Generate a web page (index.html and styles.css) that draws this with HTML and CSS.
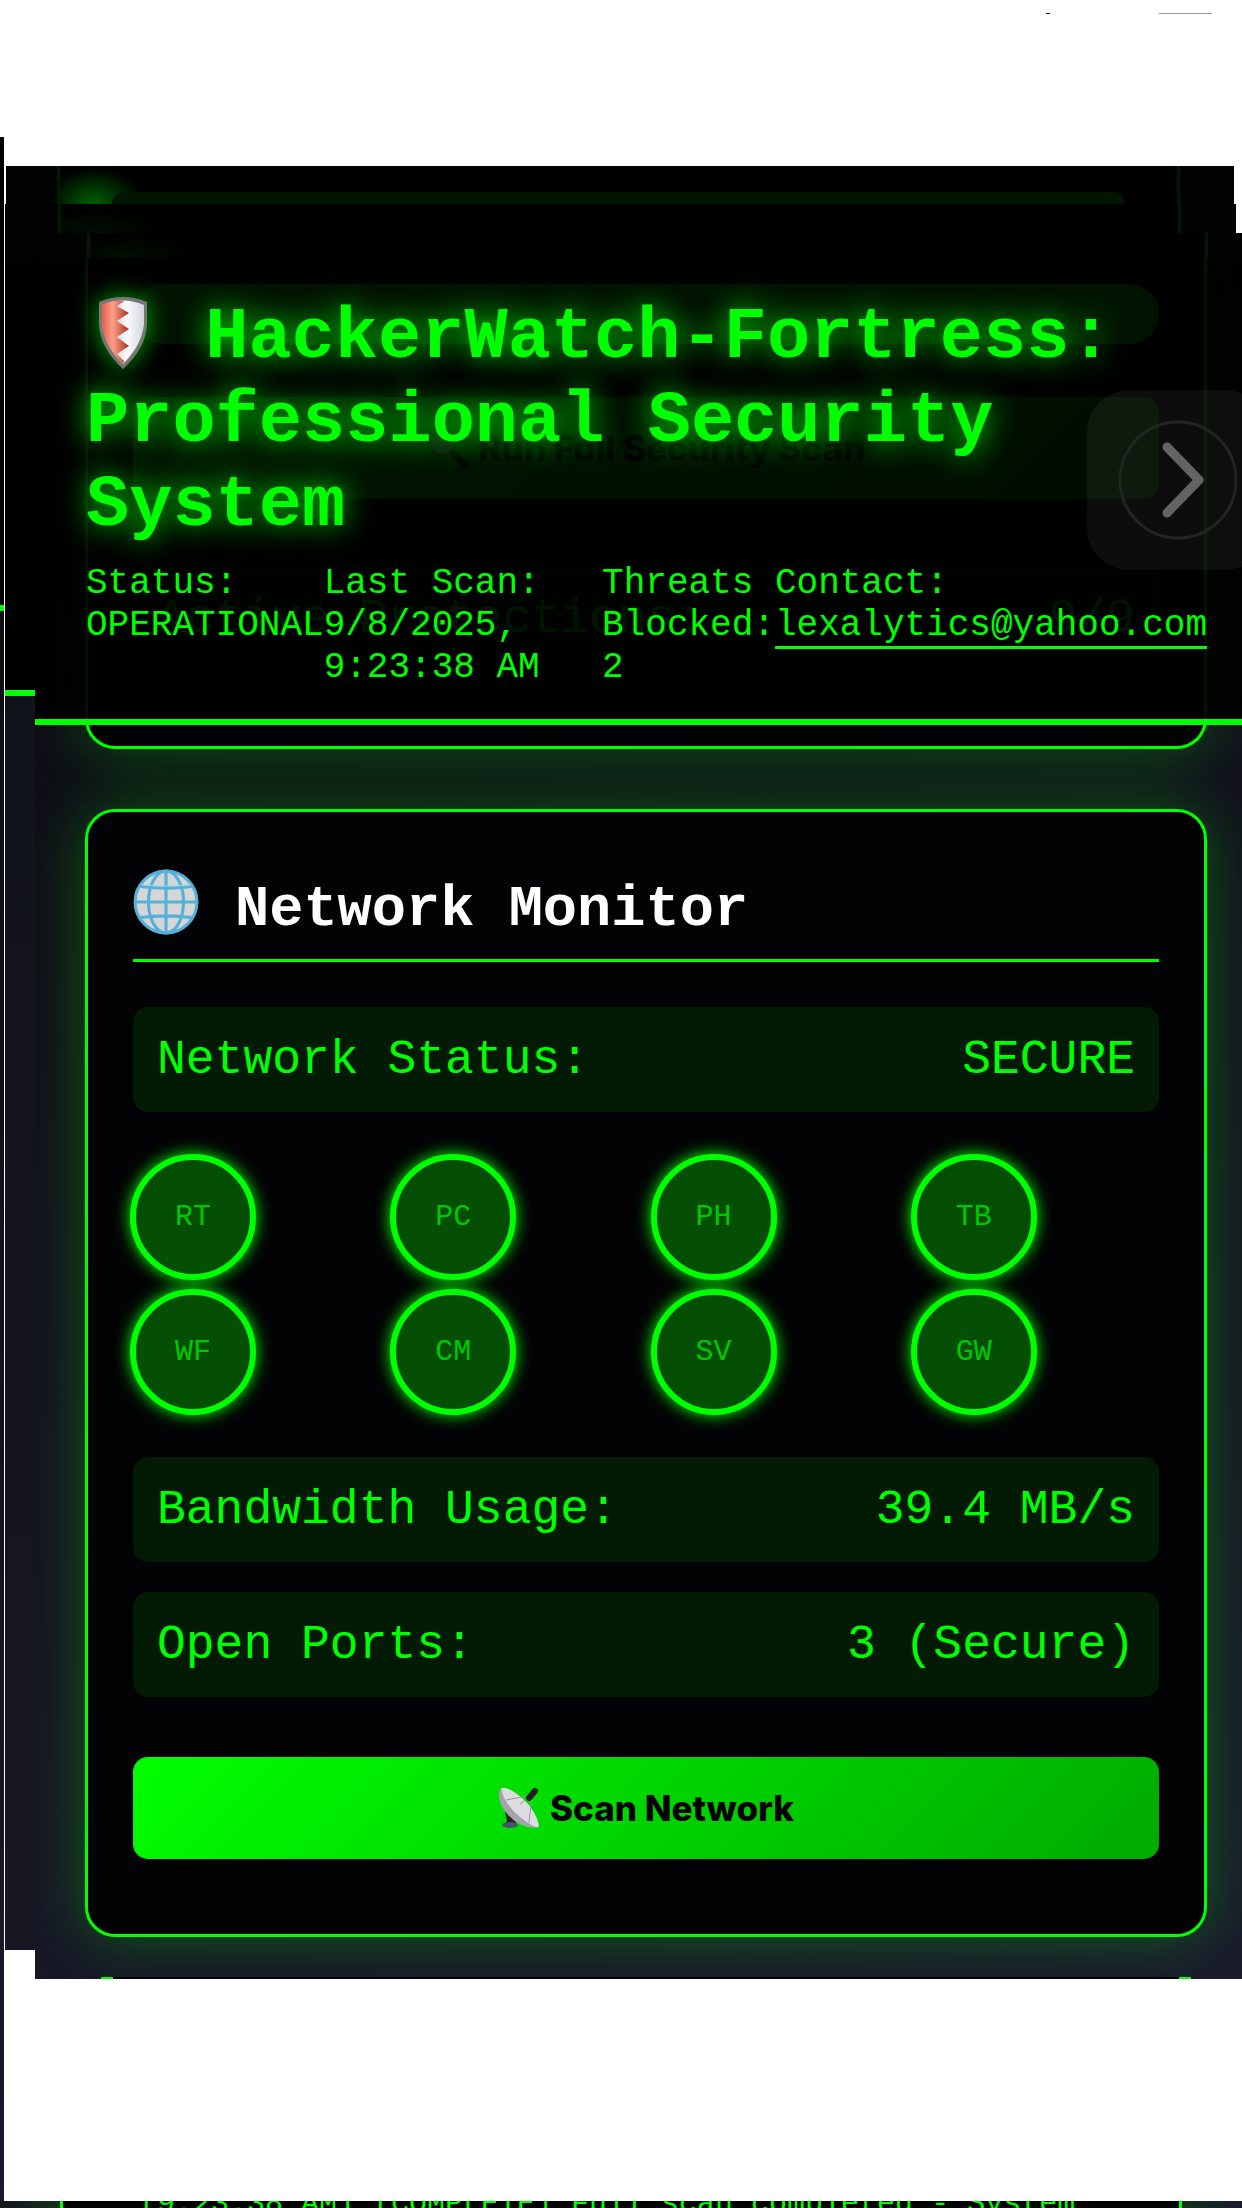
FILE: index.html
```html
<!DOCTYPE html>
<html lang="en">
<head>
<meta charset="utf-8">
<meta name="viewport" content="width=device-width, initial-scale=1">
<title>HackerWatch-Fortress</title>
<link rel="stylesheet" href="styles.css">
</head>
<body>
<div class="page">
  <div class="edge"></div>
  <div class="view">
    <div class="topbar"><span class="dot"></span><span class="pill"></span></div>
    <div class="slice slice-a"><div class="slice-frame"><div class="slice-meter"></div></div></div>
    <div class="slice slice-b"><div class="slice-frame"></div></div>
    <div class="slice slice-c"><div class="slice-frame"></div></div>
    <div class="body">
      <div class="gutter"></div>
      <main class="main">
        <section class="card card-back">
          <div class="meter"></div>
          <button class="btn" type="button">
            <svg class="btn-icon" viewBox="0 0 40 40" aria-hidden="true"><circle cx="15" cy="15" r="12" fill="#bcd" stroke="#777" stroke-width="3"/><path d="M26 26l10 10" stroke="#222" stroke-width="7" stroke-linecap="round"/></svg>
            Run Full Security Scan
          </button>
          <div class="row"><span>Active Protections:</span><span>9/9</span></div>
        </section>

        <header class="header">
          <h1 class="title"><svg class="shield" viewBox="0 3 76 72" aria-hidden="true">
            <defs>
              <linearGradient id="red" x1="0" x2="1"><stop offset="0" stop-color="#e2604a"/><stop offset=".4" stop-color="#ff9d88"/><stop offset="1" stop-color="#a8321c"/></linearGradient>
              <linearGradient id="silver" x1="0" x2="1"><stop offset="0" stop-color="#a9abb0"/><stop offset=".6" stop-color="#fafbff"/><stop offset="1" stop-color="#d2d6de"/></linearGradient>
            </defs>
            <path d="M13 8Q37-2 61 8V30Q60 54 37 75Q14 54 13 30Z" fill="#777"/>
            <path d="M16 11Q37 2 58 11V30Q56 51 37 70Q18 51 16 30Z" fill="url(#silver)"/>
            <path d="M16 11Q26 6 38 7L31 12 43 19 31 27 43 35 31 43 43 52 31 60 38 67 37 70Q18 51 16 30Z" fill="url(#red)"/>
          </svg> HackerWatch-Fortress: Professional Security System</h1>
          <div class="stats">
            <div>Status: OPERATIONAL</div>
            <div>Last Scan: 9/8/2025, 9:23:38 AM</div>
            <div>Threats Blocked: 2</div>
            <div>Contact: <a class="mail" href="mailto:lexalytics@yahoo.com">lexalytics@yahoo.com</a></div>
          </div>
          <button class="next" type="button" aria-label="Next">
            <svg viewBox="0 0 120 120" aria-hidden="true"><circle cx="61" cy="60" r="58" fill="none" stroke="#232523" stroke-width="3"/><path d="M50 27L82 60 50 93" fill="none" stroke="#626462" stroke-width="9" stroke-linecap="round" stroke-linejoin="round"/></svg>
          </button>
        </header>

        <section class="card card-front">
          <h2 class="card-title"><svg class="globe" viewBox="0 0 64 64" aria-hidden="true">
            <circle cx="32" cy="32" r="30" fill="#d4d6d8"/>
            <g fill="none" stroke="#57b0d6" stroke-width="3"><circle cx="32" cy="32" r="30"/><ellipse cx="32" cy="32" rx="17" ry="30"/><path d="M32 2v60M2 32h60M7 17q25 3 50 0M7 47q25-3 50 0"/></g>
            <path d="M8 15q24 3 48 0" fill="none" stroke="#8edcf5" stroke-width="1"/>
          </svg><span class="card-name">Network Monitor</span></h2>
          <div class="row"><span>Network Status:</span><span>SECURE</span></div>
          <div class="nodes">
            <div class="node">RT</div><div class="node">PC</div><div class="node">PH</div><div class="node">TB</div>
            <div class="node">WF</div><div class="node">CM</div><div class="node">SV</div><div class="node">GW</div>
          </div>
          <div class="row"><span>Bandwidth Usage:</span><span>39.4 MB/s</span></div>
          <div class="row row-next"><span>Open Ports:</span><span>3 (Secure)</span></div>
          <button class="btn btn-scan" type="button">
            <svg class="btn-icon" viewBox="0 0 42 42" aria-hidden="true">
              <path d="M7 24L17 32 19 39H5L9 34Z" fill="#222"/><ellipse cx="12" cy="38" rx="8" ry="3" fill="#456"/>
              <path d="M2 2Q-2 15 10 28T39 41Q44 38 34 23T2 2Z" fill="#a4a4aa"/>
              <path d="M3 1Q10-1 24 11T41 39Q38 43 22 30T3 1Z" fill="#dcdce2"/>
              <path d="M8 13L34 8 31 36M22 17L34 8" stroke="#999" stroke-width="1" fill="none"/>
              <path d="M31 11L37 4" stroke="#222" stroke-width="6" stroke-linecap="round"/>
            </svg>
            Scan Network
          </button>
        </section>
        <div class="peek"></div>
      </main>
    </div>
  </div>
  <div class="log"><div class="log-frame">[9:23:38 AM] [COMPLETE] Full scan completed - System</div></div>
</div>
</body>
</html>
```
FILE: styles.css
```css
* { box-sizing: border-box; }

body {
  margin: 0;
  background: #fff;
  color: #0f0;
  font-family: "Courier New", "Liberation Mono", monospace;
}

.page {
  display: grid;
  grid-template-columns: 4px 1fr;
  grid-template-rows: 1fr 7px;
  min-height: 100vh;
  overflow: hidden;
}

.edge {
  margin-top: 137px;
  background: linear-gradient(#000 468px, #0f0 468px, #0f0 474px, #0d0d15 474px, #1a1a2a);
}

.view { padding-left: 1px; min-width: 0; }

.topbar {
  display: flex;
  justify-content: flex-end;
  gap: 109px;
  height: 166px;
  padding: 13px 30px 0 0;
}
.dot { width: 4px; height: 1px; background: #000; }
.pill { width: 53px; height: 1px; background: #999; }

.slice { background: #010302; }
.slice-a { height: 38px; margin: 0 8px 0 1px; padding: 0 54px 0 51px; }
.slice-b { height: 29px; margin-right: 6px; padding: 0 55px 0 53px; }
.slice-c { height: 25px; padding: 0 34px 0 82px; }
.slice-frame {
  height: 100%;
  border: solid #001c00;
  border-width: 0 3px;
  background: radial-gradient(70px 24px at 34px 100%, #001000, #000);
}
.slice-a .slice-frame {
  padding: 26px 52px 0;
  background: radial-gradient(50px 36px at 34px 100%, #006000, #000);
}
.slice-meter { height: 12px; border-radius: 22px 22px 0 0; background: #001600; }

.body { display: grid; grid-template-columns: 30px 1fr; align-items: start; }

.gutter {
  height: 1692px;
  background: linear-gradient(#000200 432px, #0f0 432px, #0f0 438px, #11131a 438px, #171724);
}

.main {
  display: grid;
  padding-left: 50px;
  padding-right: 35px;
  overflow: hidden;
  background: linear-gradient(160deg, #0b0b10, #1a1a2c);
}

.card {
  display: flex;
  flex-direction: column;
  padding: 0 45px 75px;
  border: 3px solid #0f0;
  border-radius: 30px;
  background: #030305;
  box-shadow: 0 0 60px rgba(0, 255, 0, .3);
}
.card-back {
  grid-area: 1 / 1;
  padding-top: 26px;
  border-top: 0;
  border-radius: 0 0 30px 30px;
}
.card-front { grid-area: 2 / 1; margin-top: 60px; padding-top: 54px; }

.header {
  grid-area: 1 / 1;
  align-self: start;
  position: relative;
  margin: 0 -35px 24px -50px;
  padding: 38px 35px 30px 51px;
  border-bottom: 6px solid #0f0;
  background: rgba(0, 0, 0, .92);
}

.title {
  margin: 0 0 15px;
  font-size: 72px;
  line-height: 84px;
  text-shadow: 0 0 30px #0f0;
}
.shield { width: 76px; height: 72px; vertical-align: -12px; filter: drop-shadow(0 0 12px #0a0); }

.stats {
  display: grid;
  grid-template-columns: min-content 1fr min-content min-content;
  font-size: 36px;
  line-height: 42px;
}
.mail { color: #0f0; text-decoration: none; border-bottom: 3px solid #0f0; }

.next {
  position: absolute;
  top: 132px;
  right: -25px;
  width: 180px;
  height: 180px;
  padding: 30px;
  border: 0;
  border-radius: 42px;
  background: rgba(255, 255, 255, .05);
}
.next svg { display: block; width: 120px; height: 120px; }

.meter { height: 60px; margin-bottom: 53px; border-radius: 30px; background: #00dc00; }

.btn {
  display: flex;
  align-items: center;
  justify-content: center;
  gap: 10px;
  height: 102px;
  padding: 0;
  border: 0;
  border-radius: 15px;
  background: linear-gradient(135deg, #0f0, #0a0);
  color: #000;
  font: 800 35px Inter, sans-serif;
}
.btn-icon { width: 42px; height: 42px; }
.card-back .btn { margin-bottom: 67px; }
.btn-scan { margin-top: 60px; }

.row {
  display: flex;
  align-items: center;
  justify-content: space-between;
  height: 105px;
  padding: 0 24px;
  border-radius: 15px;
  background: #031a05;
  font-size: 48px;
}
.row-next { margin-top: 30px; }

.card-title {
  display: flex;
  align-items: center;
  gap: 36px;
  margin: 0 0 45px;
  padding-bottom: 21px;
  border-bottom: 3px solid #0f0;
  color: #fff;
  font-size: 57px;
  line-height: 56px;
}
.card-name { padding-top: 16px; }
.globe { width: 66px; height: 66px; }

.nodes {
  display: grid;
  grid-template-columns: repeat(4, 1fr);
  gap: 9px;
  margin: 42px -3px;
}
.node {
  display: flex;
  align-items: center;
  justify-content: center;
  width: 126px;
  height: 126px;
  border: 6px solid #0f0;
  border-radius: 50%;
  background: #044f04;
  box-shadow: 0 0 16px #0f0;
  color: #00c800;
  font-size: 30px;
}

.peek { grid-area: 3 / 1; height: 2px; margin: 40px 16px 0; border: solid #0f0; border-width: 0 12px; background: #020202; }

.log {
  grid-column: 1 / -1;
  padding: 0 60px;
  background: linear-gradient(90deg, #14141f, #12301c 60px, #12301c calc(100% - 60px), #1a1a2c);
}
.log-frame {
  height: 7px;
  padding-left: 76px;
  border: solid #0f0;
  border-width: 0 3px;
  background: #010201;
  overflow: hidden;
  white-space: nowrap;
  font-size: 30px;
  line-height: 7px;
}
```
